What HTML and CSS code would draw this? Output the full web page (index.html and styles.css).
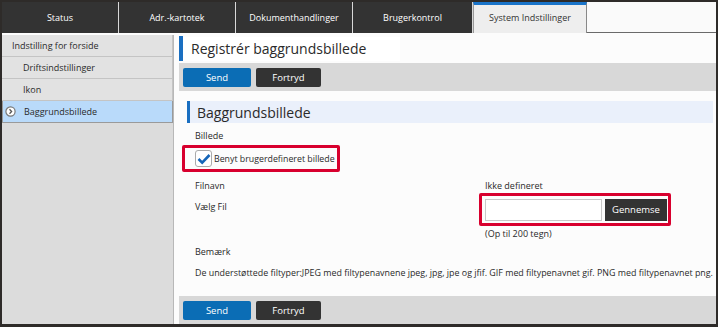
FILE: index.html
```html
<!DOCTYPE html>
<html>
<head>
    <title>System Indstillinger</title>
    <link rel="stylesheet" href="styles.css">
</head>
<body>
    <div class="frame">
        <div class="tabs">
            <div class="tab">Status</div>
            <div class="tab">Adr.-kartotek</div>
            <div class="tab">Dokumenthandlinger</div>
            <div class="tab">Brugerkontrol</div>
            <div class="tab tab-active">System Indstillinger</div>
            <div class="tab-rest"></div>
        </div>

        <div class="main">
            <div class="sidebar">
                <div class="side-item">Indstilling for forside</div>
                <div class="side-item sub">Driftsindstillinger</div>
                <div class="side-item sub">Ikon</div>
                <div class="side-item sub selected">
                    <svg class="side-icon" width="11" height="11" viewBox="0 0 11 11">
                        <circle cx="5.5" cy="5.5" r="4.6" fill="#fff" stroke="#777" stroke-width="1.2"/>
                        <path d="M4.5 3.3 L6.6 5.5 L4.5 7.7" fill="none" stroke="#555" stroke-width="1.3"/>
                    </svg>
                    Baggrundsbillede
                </div>
            </div>

            <div class="content">
                <div class="page-title"><span>Registrér baggrundsbillede</span></div>
                <div class="button-bar">
                    <button class="btn btn-send">Send</button>
                    <button class="btn btn-cancel">Fortryd</button>
                </div>

                <div class="section-title">Baggrundsbillede</div>

                <div class="form">
                    <div class="label">Billede</div>
                    <div class="highlight check-box">
                        <span class="checkbox">
                            <svg width="14" height="12" viewBox="0 0 14 12">
                                <path d="M1.5 6 L5.2 9.6 L12.5 2" fill="none" stroke="#1565b8" stroke-width="2.6"/>
                            </svg>
                        </span>
                        Benyt brugerdefineret billede
                    </div>

                    <div class="file-rows">
                        <div class="file-labels">
                            <div class="label">Filnavn</div>
                            <div class="label">Vælg Fil</div>
                        </div>
                        <div class="file-fields">
                            <div class="label">Ikke defineret</div>
                            <div class="highlight file-box">
                                <input class="file-input" type="text">
                                <button class="btn-browse">Gennemse</button>
                            </div>
                            <div class="hint">(Op til 200 tegn)</div>
                        </div>
                    </div>

                    <div class="label note-label">Bemærk</div>
                    <div class="note">De understøttede filtyper:JPEG med filtypenavnene jpeg, jpg, jpe og jfif. GIF med filtypenavnet gif. PNG med filtypenavnet png.</div>
                </div>

                <div class="button-bar bottom">
                    <button class="btn btn-send">Send</button>
                    <button class="btn btn-cancel">Fortryd</button>
                </div>
            </div>
        </div>
    </div>
</body>
</html>
```

FILE: styles.css
```css
body {
    margin: 0;
    padding: 0;
    font-family: "Open Sans", "Noto Sans", sans-serif;
    font-size: 9px;
    color: #2a2a2a;
    background-color: #fff;
}

.frame {
    width: 718px;
    height: 327px;
    box-sizing: border-box;
    border: 2px solid #2e2b29;
    border-bottom-width: 3px;
    display: flex;
    flex-direction: column;
    overflow: hidden;
}

.tabs {
    display: flex;
    height: 31px;
    background-color: #333;
    flex-shrink: 0;
}

.tab {
    width: 116px;
    color: #fff;
    display: flex;
    align-items: center;
    justify-content: center;
    border-right: 1px solid #d8d8d8;
}

.tab:nth-child(4) {
    width: 119px;
}

.tab-active {
    width: 114px;
    background-color: #eeeeee;
    color: #333;
    border-top: 3px solid #1a74c9;
    border-left: 1px solid #999;
    border-right: 1px solid #888;
    box-sizing: border-box;
    padding-bottom: 3px;
}

.tab-rest {
    flex: 1;
    background-color: #fafafa;
    border-bottom: 1px solid #6a6a6a;
}

.main {
    flex: 1;
    display: flex;
    background-color: #fcfcfc;
    padding-top: 2px;
}

.sidebar {
    width: 171px;
    background-color: #dcdcdc;
    border-right: 1px solid #b8b8b8;
    flex-shrink: 0;
}

.side-item {
    height: 21px;
    display: flex;
    align-items: center;
    padding-left: 10px;
    background-color: #e2e2e2;
    border-bottom: 1px solid #c4c4c4;
    border-right: 1px solid #c4c4c4;
    position: relative;
}

.side-item.sub {
    padding-left: 21px;
}

.side-item.selected {
    background-color: #b9dafa;
    border: 1px solid #9a9a9a;
    border-top: none;
}

.side-icon {
    position: absolute;
    left: 2px;
    top: 5px;
}

.content {
    flex: 1;
    padding: 1px 0 0 5px;
    display: flex;
    flex-direction: column;
}

.page-title {
    height: 25px;
    border-left: 4px solid #1a6fc1;
    display: flex;
    align-items: center;
}

.page-title span {
    background-color: #fff;
    font-size: 14px;
    padding: 1px 34px 1px 8px;
    line-height: 22px;
}

.button-bar {
    background-color: #d8d8d8;
    height: 28px;
    display: flex;
    align-items: center;
    gap: 5px;
    padding-left: 4px;
    margin-top: 2px;
}

.btn {
    height: 19px;
    font-family: "Open Sans", "Noto Sans", sans-serif;
    font-size: 9.5px;
    color: #fff;
    border: none;
    border-radius: 2px;
    padding: 0;
    cursor: pointer;
}

.btn-send {
    width: 68px;
    background-color: #0b6db5;
}

.btn-cancel {
    width: 65px;
    background-color: #333;
}

.section-title {
    margin: 10px 3px 0 8px;
    height: 22px;
    border-left: 3px solid #1a6fc1;
    background-color: #eaf0fb;
    font-size: 14px;
    padding-left: 7px;
    display: flex;
    align-items: center;
}

.form {
    flex: 1;
    padding: 6px 0 0 16px;
}

.label {
    line-height: 14px;
}

.highlight {
    border: 3px solid #d8002e;
    border-radius: 2px;
    box-sizing: border-box;
}

.check-box {
    display: flex;
    align-items: center;
    gap: 2px;
    width: 158px;
    height: 27px;
    margin: 2px 0 0 -13px;
    padding-left: 10px;
    font-size: 8.8px;
    white-space: nowrap;
}

.checkbox {
    width: 15px;
    height: 15px;
    border: 1px solid #aaa;
    border-radius: 3px;
    background-color: #fff;
    display: flex;
    align-items: center;
    justify-content: center;
}

.file-rows {
    display: flex;
    margin-top: 7px;
}

.file-labels {
    width: 290px;
    display: flex;
    flex-direction: column;
    gap: 7px;
}

.file-fields {
    display: flex;
    flex-direction: column;
}

.file-box {
    display: flex;
    align-items: center;
    gap: 3px;
    width: 192px;
    height: 33px;
    margin-left: -6px;
    padding-left: 3px;
}

.file-input {
    width: 117px;
    height: 22px;
    box-sizing: border-box;
    border: 1px solid #c8c8c8;
    margin: 0;
    padding: 0;
}

.btn-browse {
    width: 62px;
    height: 22px;
    background-color: #333;
    color: #fff;
    border: none;
    font-family: "Open Sans", "Noto Sans", sans-serif;
    font-size: 9.5px;
    padding: 0;
}

.hint {
    line-height: 14px;
    margin-top: 1px;
}

.note-label {
    margin-top: 4px;
}

.note {
    margin-top: 7px;
    font-size: 8.9px;
    line-height: 14px;
    white-space: nowrap;
}

.button-bar.bottom {
    margin-top: 0;
}
```
